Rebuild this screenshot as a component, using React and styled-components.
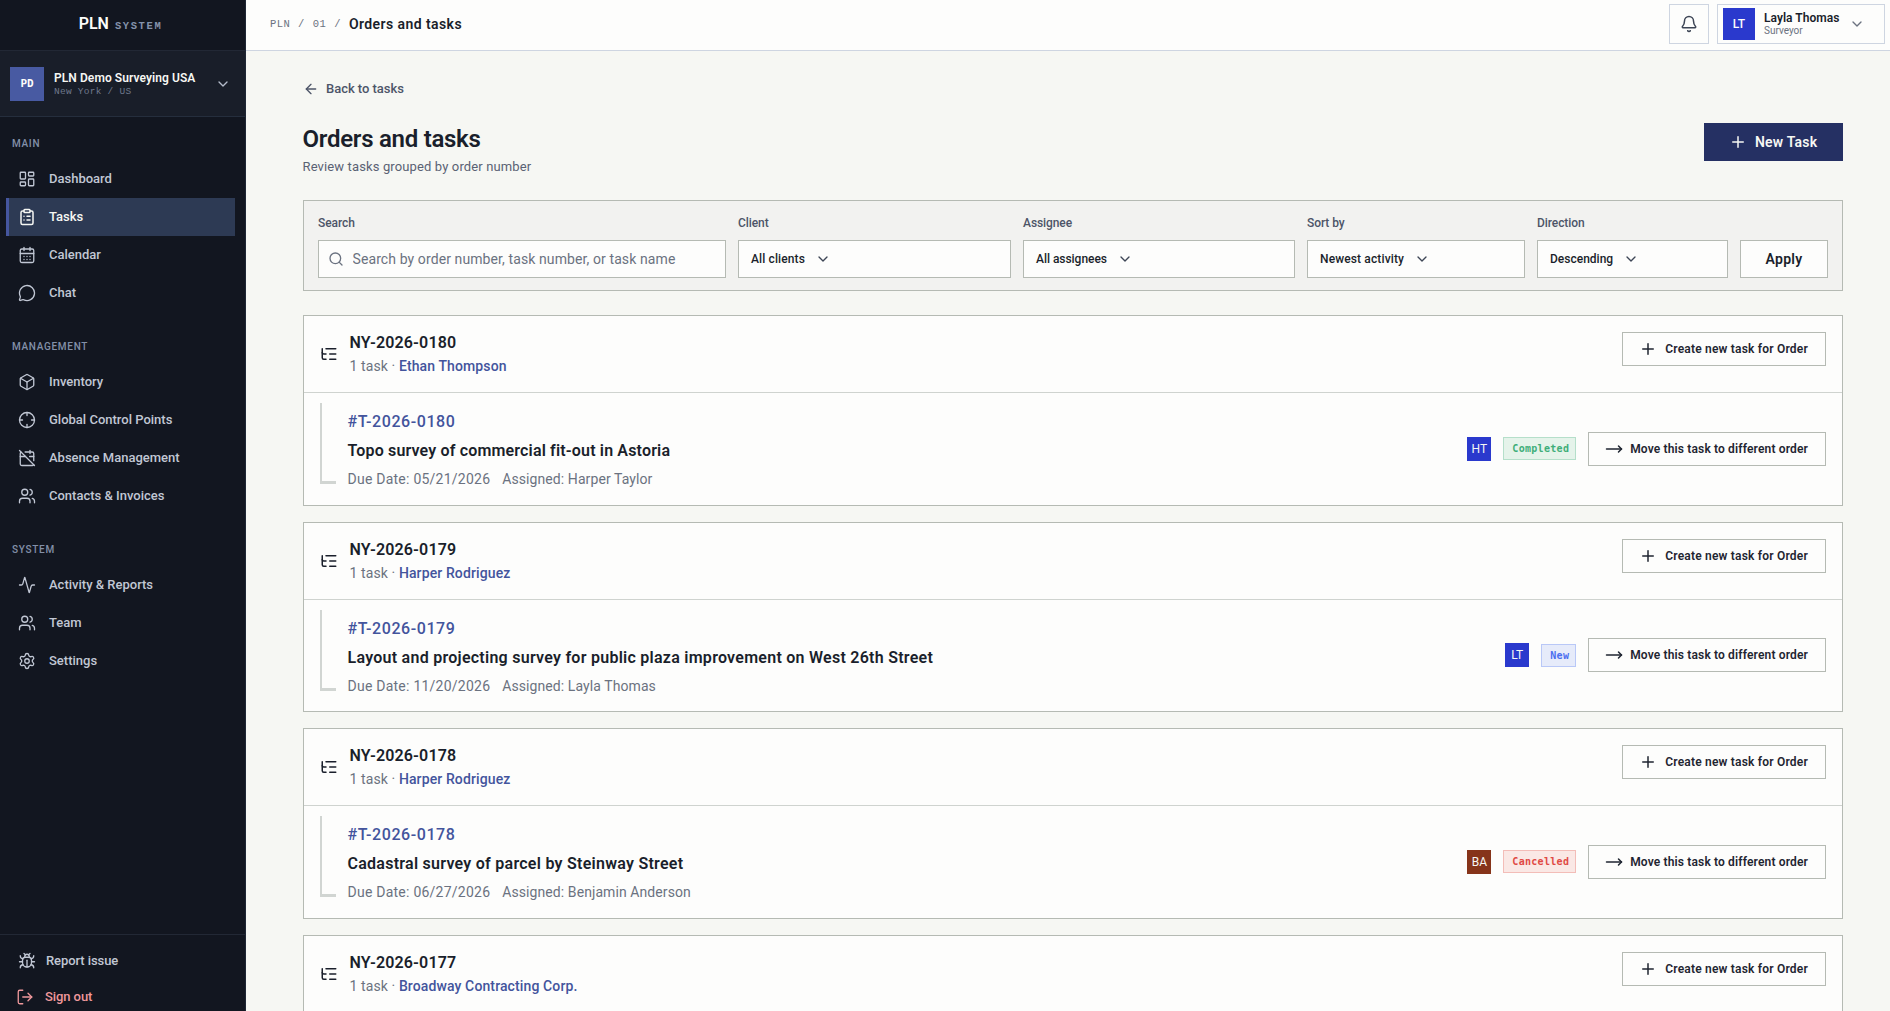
import React from 'react';
import styled, { createGlobalStyle } from 'styled-components';
import {
  Activity,
  ArrowLeft,
  Bell,
  Box,
  Bug,
  CalendarDays,
  CalendarOff,
  ChevronDown,
  ClipboardList,
  Crosshair,
  LayoutDashboard,
  ListTree,
  LogOut,
  MessageCircle,
  MoveRight,
  Plus,
  Search,
  Settings,
  Users,
} from 'lucide-react';

const navSections = [
  {
    label: 'Main',
    items: [
      { name: 'Dashboard', icon: LayoutDashboard },
      { name: 'Tasks', icon: ClipboardList, active: true },
      { name: 'Calendar', icon: CalendarDays },
      { name: 'Chat', icon: MessageCircle },
    ],
  },
  {
    label: 'Management',
    items: [
      { name: 'Inventory', icon: Box },
      { name: 'Global Control Points', icon: Crosshair },
      { name: 'Absence Management', icon: CalendarOff },
      { name: 'Contacts & Invoices', icon: Users },
    ],
  },
  {
    label: 'System',
    items: [
      { name: 'Activity & Reports', icon: Activity },
      { name: 'Team', icon: Users },
      { name: 'Settings', icon: Settings },
    ],
  },
];

const filters = [
  { label: 'Client', value: 'All clients', spacing: '0.12px' },
  { label: 'Assignee', value: 'All assignees', spacing: '-0.04px' },
  { label: 'Sort by', value: 'Newest activity', spacing: '0.13px' },
  { label: 'Direction', value: 'Descending' },
];

const orders = [
  {
    number: 'NY-2026-0180',
    client: 'Ethan Thompson',
    task: {
      number: '#T-2026-0180',
      name: 'Topo survey of commercial fit-out in Astoria',
      spacing: '0.16px',
      due: '05/21/2026',
      assigned: 'Harper Taylor',
      initials: 'HT',
      avatar: '#2a39cd',
      status: 'Completed',
    },
  },
  {
    number: 'NY-2026-0179',
    client: 'Harper Rodriguez',
    task: {
      number: '#T-2026-0179',
      name: 'Layout and projecting survey for public plaza improvement on West 26th Street',
      due: '11/20/2026',
      assigned: 'Layla Thomas',
      initials: 'LT',
      avatar: '#2a39cd',
      status: 'New',
    },
  },
  {
    number: 'NY-2026-0178',
    client: 'Harper Rodriguez',
    task: {
      number: '#T-2026-0178',
      name: 'Cadastral survey of parcel by Steinway Street',
      due: '06/27/2026',
      assigned: 'Benjamin Anderson',
      initials: 'BA',
      avatar: '#86341a',
      status: 'Cancelled',
    },
  },
  {
    number: 'NY-2026-0177',
    client: 'Broadway Contracting Corp.',
  },
];

const statusColors = {
  Completed: { text: '#3fae79', background: '#e5f3ea', border: '#b5dfca' },
  New: { text: '#4a6ff0', background: '#e6ebfa', border: '#b9c8f7' },
  Cancelled: { text: '#e04a44', background: '#fae8e5', border: '#f3bdb8' },
};

export default function App() {
  return (
    <Shell>
      <GlobalStyle />
      <Sidebar />
      <Content>
        <Header />
        <Page>
          <BackLink>
            <ArrowLeft size={16} />
            <span>Back to tasks</span>
          </BackLink>
          <TitleRow>
            <Titles>
              <PageTitle>Orders and tasks</PageTitle>
              <Subtitle>Review tasks grouped by order number</Subtitle>
            </Titles>
            <PrimaryButton>
              <Plus size={18} />
              New Task
            </PrimaryButton>
          </TitleRow>
          <FilterPanel />
          <OrderList>
            {orders.map((order) => (
              <Order key={order.number} order={order} />
            ))}
          </OrderList>
        </Page>
      </Content>
    </Shell>
  );
}

function Sidebar() {
  return (
    <Aside>
      <Brand>
        <strong>PLN</strong>
        <span>SYSTEM</span>
      </Brand>
      <Organization>
        <OrgAvatar>PD</OrgAvatar>
        <OrgText>
          <strong>PLN Demo Surveying USA</strong>
          <span>New York / US</span>
        </OrgText>
        <ChevronDown size={16} />
      </Organization>
      <Nav>
        {navSections.map((section) => (
          <React.Fragment key={section.label}>
            <SectionLabel>{section.label}</SectionLabel>
            {section.items.map(({ name, icon: Icon, active }) => (
              <NavItem key={name} $active={active}>
                <Icon size={18} strokeWidth={active ? 2 : 1.75} />
                <span>{name}</span>
              </NavItem>
            ))}
          </React.Fragment>
        ))}
      </Nav>
      <SidebarFooter>
        <FooterItem>
          <Bug size={18} strokeWidth={1.75} />
          <span>Report issue</span>
        </FooterItem>
        <FooterItem $danger>
          <LogOut size={18} strokeWidth={1.75} />
          <span>Sign out</span>
        </FooterItem>
      </SidebarFooter>
    </Aside>
  );
}

function Header() {
  return (
    <Topbar>
      <Breadcrumb>
        <span>PLN</span>
        <span>/</span>
        <span>01</span>
        <span>/</span>
        <strong>Orders and tasks</strong>
      </Breadcrumb>
      <TopbarActions>
        <BellButton>
          <Bell size={18} />
        </BellButton>
        <UserMenu>
          <UserAvatar>LT</UserAvatar>
          <UserText>
            <strong>Layla Thomas</strong>
            <span>Surveyor</span>
          </UserText>
          <ChevronDown size={16} />
        </UserMenu>
      </TopbarActions>
    </Topbar>
  );
}

function FilterPanel() {
  return (
    <Panel>
      <Field>
        <label>Search</label>
        <SearchBox>
          <Search size={16} />
          <input type="text" placeholder="Search by order number, task number, or task name" />
        </SearchBox>
      </Field>
      {filters.map(({ label, value, spacing }) => (
        <Field key={label}>
          <label>{label}</label>
          <SelectBox $spacing={spacing}>
            {value}
            <ChevronDown size={16} />
          </SelectBox>
        </Field>
      ))}
      <ApplyButton>Apply</ApplyButton>
    </Panel>
  );
}

function Order({ order: { number, client, task } }) {
  return (
    <Card>
      <CardHeader>
        <ListTree size={18} />
        <OrderInfo>
          <h2>{number}</h2>
          <p>
            1 task · <a>{client}</a>
          </p>
        </OrderInfo>
        <SmallButton>
          <Plus size={18} />
          Create new task for Order
        </SmallButton>
      </CardHeader>
      {task && (
        <TaskRow>
          <Branch />
          <TaskInfo>
            <TaskNumber>{task.number}</TaskNumber>
            <TaskName $spacing={task.spacing}>{task.name}</TaskName>
            <TaskMeta>
              <span>Due Date: {task.due}</span>
              <span>Assigned: {task.assigned}</span>
            </TaskMeta>
          </TaskInfo>
          <TaskActions>
            <Initials $color={task.avatar}>{task.initials}</Initials>
            <Status $colors={statusColors[task.status]}>{task.status}</Status>
            <SmallButton $wide>
              <MoveRight size={18} />
              Move this task to different order
            </SmallButton>
          </TaskActions>
        </TaskRow>
      )}
    </Card>
  );
}

const GlobalStyle = createGlobalStyle`
  * {
    box-sizing: border-box;
  }

  body {
    margin: 0;
    overflow: hidden;
    font-family: 'Roboto', 'Liberation Sans', sans-serif;
    color: #1a1f2b;
    background: #f6f7f3;
  }

  h1, h2, h3, p {
    margin: 0;
  }

  button, input {
    font-family: inherit;
    border-radius: 0;
  }

  svg {
    flex-shrink: 0;
  }
`;

const Shell = styled.div`
  display: flex;
  height: 100vh;
  overflow: hidden;
`;

const Aside = styled.aside`
  display: flex;
  flex-direction: column;
  flex-shrink: 0;
  width: 246px;
  background: #121620;
  border-right: 1px solid #1f2735;
`;

const Brand = styled.div`
  display: flex;
  justify-content: center;
  align-items: baseline;
  gap: 6px;
  flex-shrink: 0;
  height: 51px;
  padding: 12px 4px 0 0;
  border-bottom: 1px solid #222835;

  strong {
    font-size: 16px;
    line-height: 24px;
    font-weight: 600;
    color: #fdfdfb;
  }

  span {
    font-family: 'Liberation Mono', monospace;
    font-size: 10.5px;
    font-weight: 700;
    letter-spacing: 1.6px;
    color: #8492ab;
  }
`;

const Organization = styled.div`
  display: flex;
  align-items: center;
  flex-shrink: 0;
  height: 66px;
  padding: 0 14px 0 10px;
  background: #191e29;
  border-bottom: 1px solid #252e3d;

  svg {
    color: #b4bccb;
  }
`;

const OrgAvatar = styled.div`
  display: flex;
  justify-content: center;
  align-items: center;
  width: 34px;
  height: 34px;
  background: #485aa2;
  color: #fdfdfb;
  font: 700 11px 'DejaVu Sans Mono', monospace;
`;

const OrgText = styled.div`
  display: flex;
  flex-direction: column;
  flex: 1;
  margin: 1px 0 0 10px;

  strong {
    font-size: 12px;
    line-height: 15px;
    font-weight: 600;
    letter-spacing: 0.08px;
    color: #f6f7f3;
  }

  span {
    font-family: 'Liberation Mono', monospace;
    font-size: 9.5px;
    line-height: 12px;
    letter-spacing: 0.25px;
    color: #6f798c;
  }
`;

const Nav = styled.nav`
  display: flex;
  flex-direction: column;
  flex: 1;
  padding: 0 10px 0 6px;
`;

const SectionLabel = styled.div`
  height: 43px;
  padding: 19px 6px 0;
  font-size: 10px;
  line-height: 15px;
  font-weight: 500;
  letter-spacing: 0.7px;
  text-transform: uppercase;
  color: #8390a8;

  a + & {
    height: 51px;
    padding-top: 27px;
  }
`;

const NavItem = styled.a`
  display: flex;
  align-items: center;
  gap: 13px;
  height: 38px;
  padding-left: 9px;
  border-left: 3px solid ${({ $active }) => ($active ? '#45569f' : 'transparent')};
  background: ${({ $active }) => ($active ? '#2d3a54' : 'transparent')};
  color: ${({ $active }) => ($active ? '#f6f7f3' : '#c1c7d4')};
  font-size: 13px;
  font-weight: 500;

  span {
    margin-bottom: 2px;
  }
`;

const SidebarFooter = styled.div`
  height: 77px;
  padding: 8px 0 0 16px;
  border-top: 1px solid #222835;
`;

const FooterItem = styled.a`
  display: flex;
  align-items: center;
  gap: 10px;
  height: 36px;
  margin-left: ${({ $danger }) => ($danger ? '0' : '2px')};
  color: ${({ $danger }) => ($danger ? '#f0989c' : '#c1c7d4')};
  font-size: 13px;
  font-weight: 500;
  letter-spacing: -0.08px;

  span {
    margin: 0 0 1px ${({ $danger }) => ($danger ? '1px' : '0')};
  }
`;

const Content = styled.div`
  flex: 1;
  min-width: 0;
`;

const Topbar = styled.header`
  display: flex;
  justify-content: space-between;
  align-items: flex-start;
  height: 51px;
  padding: 4px 5px 0 24px;
  background: #fdfdfc;
  border-bottom: 1px solid #ced5e1;
`;

const Breadcrumb = styled.div`
  display: flex;
  align-items: center;
  gap: 8px;
  height: 40px;

  span {
    font-family: 'Liberation Mono', monospace;
    font-size: 10.5px;
    letter-spacing: 0.4px;
    color: #6b7280;
  }

  strong {
    font-size: 14px;
    font-weight: 600;
    letter-spacing: 0.42px;
  }
`;

const TopbarActions = styled.div`
  display: flex;
  gap: 8px;
`;

const BellButton = styled.button`
  display: flex;
  justify-content: center;
  align-items: center;
  width: 40px;
  height: 40px;
  padding: 0;
  border: 1px solid #ced5e1;
  background: #fdfdfc;
  color: #3d4555;
`;

const UserMenu = styled.div`
  display: flex;
  align-items: center;
  width: 168px;
  height: 40px;
  padding-left: 5px;
  border: 1px solid #ced5e1;

  svg {
    margin-left: 9px;
    color: #6b7280;
  }
`;

const UserAvatar = styled.div`
  display: flex;
  justify-content: center;
  align-items: center;
  width: 32px;
  height: 32px;
  background: #2a39cd;
  color: #fdfdfb;
  font-size: 12px;
  font-weight: 500;
`;

const UserText = styled.div`
  display: flex;
  flex-direction: column;
  margin: -1px 0 0 9px;

  strong {
    font-size: 12px;
    line-height: 14px;
    font-weight: 600;
    letter-spacing: 0.05px;
  }

  span {
    font-size: 10px;
    line-height: 11px;
    color: #6b7280;
  }
`;

const Page = styled.main`
  padding: 28px 47px 0 57px;
`;

const BackLink = styled.a`
  display: flex;
  align-items: center;
  gap: 7px;
  height: 20px;
  color: #4d5568;
  font-size: 13px;
  font-weight: 500;
  letter-spacing: -0.03px;

  span {
    margin-bottom: 2px;
  }
`;

const TitleRow = styled.div`
  display: flex;
  justify-content: space-between;
  align-items: flex-start;
  height: 53px;
  margin: 24px 0;
`;

const Titles = styled.div`
  margin-left: -0.5px;
`;

const PageTitle = styled.h1`
  font-size: 24px;
  line-height: 32px;
  font-weight: 600;
  letter-spacing: -0.27px;
`;

const Subtitle = styled.p`
  margin-top: 2px;
  font-size: 13px;
  line-height: 20px;
  letter-spacing: 0.13px;
  color: #5a6273;
`;

const PrimaryButton = styled.button`
  display: flex;
  align-items: center;
  gap: 8px;
  width: 139px;
  height: 38px;
  padding: 0 0 0 25px;
  border: 0;
  background: #253063;
  color: #f6f7f3;
  font-size: 14px;
  font-weight: 600;
  letter-spacing: 0.2px;
`;

const Panel = styled.section`
  display: grid;
  grid-template-columns: 408px 273px 272px 218px 191px 88px;
  align-items: end;
  gap: 12px;
  height: 91px;
  padding: 0 14px 12px;
  border: 1px solid #b5bab3;
  background: #f2f2f0;
`;

const Field = styled.div`
  label {
    display: block;
    margin-bottom: 9px;
    font-size: 12px;
    line-height: 16px;
    font-weight: 500;
    letter-spacing: -0.08px;
    color: #4d5568;
  }
`;

const SearchBox = styled.div`
  display: flex;
  align-items: center;
  gap: 8.5px;
  height: 38px;
  padding-left: 9px;
  border: 1px solid #b5bab3;
  background: #fdfdfc;

  svg {
    color: #6b7280;
  }

  input {
    flex: 1;
    padding: 0;
    border: 0;
    outline: none;
    background: transparent;
    font-size: 14px;
    letter-spacing: 0.1px;

    &::placeholder {
      color: #6b7280;
    }
  }
`;

const SelectBox = styled.div`
  display: flex;
  align-items: center;
  gap: 10px;
  height: 38px;
  padding-left: 12px;
  border: 1px solid #b5bab3;
  background: #fdfdfc;
  font-size: 12px;
  font-weight: 500;
  letter-spacing: ${({ $spacing }) => $spacing || '0'};

  svg {
    color: #3d4555;
  }
`;

const ApplyButton = styled.button`
  height: 38px;
  border: 1px solid #b5bab3;
  background: #fdfdfc;
  color: #1a1f2b;
  font-size: 14px;
  font-weight: 600;
  letter-spacing: 0.3px;
`;

const OrderList = styled.div`
  display: flex;
  flex-direction: column;
  gap: 16px;
  margin-top: 24px;
`;

const Card = styled.article`
  flex-shrink: 0;
  height: 190.6px;
  border: 1px solid #b5bab3;
  background: #fdfdfc;
`;

const CardHeader = styled.header`
  display: flex;
  align-items: center;
  gap: 11.5px;
  height: 77px;
  padding: 0 16px;
  border-bottom: 1px solid #cfd3cf;
`;

const OrderInfo = styled.div`
  flex: 1;

  h2 {
    padding-top: 1px;
    font-size: 16px;
    line-height: 24px;
    font-weight: 600;
    letter-spacing: 0.15px;
  }

  p {
    font-size: 14px;
    line-height: 23px;
    letter-spacing: 0.1px;
    color: #6b7280;
  }

  a {
    font-weight: 500;
    letter-spacing: 0.12px;
    color: #43549c;
  }
`;

const SmallButton = styled.button`
  display: flex;
  align-items: center;
  gap: ${({ $wide }) => ($wide ? '7px' : '8px')};
  height: 34px;
  padding: 0 17px 0 16px;
  border: 1px solid #b5bab3;
  background: #fdfdfc;
  color: #1f2531;
  font-size: 12px;
  font-weight: 600;
  letter-spacing: ${({ $wide }) => ($wide ? '0.15px' : '0.2px')};

  ${CardHeader} & {
    align-self: flex-start;
    margin-top: 16px;
  }
`;

const TaskRow = styled.div`
  display: flex;
  align-items: flex-start;
  gap: 11.5px;
  height: 111.6px;
  padding: 0 16px;
`;

/* connector between an order and its task */
const Branch = styled.div`
  width: 16px;
  height: 81px;
  margin-top: 10px;
  border-left: 2px solid #d1d5d2;
  border-bottom: 3px solid #d1d5d2;
`;

const TaskInfo = styled.div`
  flex: 1;
  padding-top: 17px;
`;

const TaskNumber = styled.div`
  font-size: 16px;
  line-height: 24px;
  font-weight: 500;
  letter-spacing: 0.57px;
  color: #43549c;
`;

const TaskName = styled.h3`
  margin: 5px 0 4px;
  font-size: 16px;
  line-height: 24px;
  font-weight: 600;
  letter-spacing: ${({ $spacing }) => $spacing || '0.26px'};
`;

const TaskMeta = styled.div`
  display: flex;
  gap: 12px;
  font-size: 14px;
  line-height: 25px;
  letter-spacing: 0.08px;
  color: #6b7280;

  span:first-child {
    letter-spacing: 0.24px;
  }
`;

const TaskActions = styled.div`
  display: flex;
  align-items: center;
  align-self: center;
  gap: 12px;
`;

const Initials = styled.div`
  display: flex;
  justify-content: center;
  align-items: center;
  width: 24px;
  height: 24px;
  background: ${({ $color }) => $color};
  color: #f6f7f3;
  font-size: 12px;
`;

const Status = styled.div`
  height: 23px;
  padding: 0 6px 0 8px;
  border: 1px solid ${({ $colors }) => $colors.border};
  background: ${({ $colors }) => $colors.background};
  color: ${({ $colors }) => $colors.text};
  font: 700 10px/21px 'DejaVu Sans Mono', monospace;
  letter-spacing: 0.3px;
`;
